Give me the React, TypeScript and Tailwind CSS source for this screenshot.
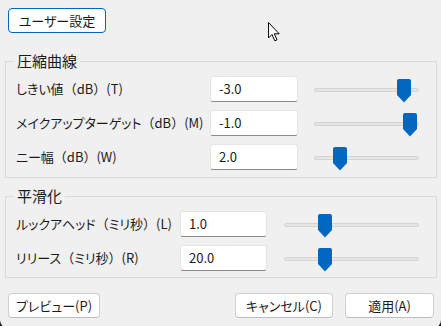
import React from 'react'

const font = { fontFamily: '"Noto Sans CJK JP", "Noto Sans", sans-serif' }

function Thumb({ left }: { left: number }) {
  return (
    <svg
      className="absolute top-[3px]"
      style={{ left }}
      width="14"
      height="24"
      viewBox="0 0 14 24"
    >
      <path d="M2 0 H12 Q14 0 14 2 V16 L7 23.5 L0 16 V2 Q0 0 2 0 Z" fill="#0067c0" />
    </svg>
  )
}

function Slider({ width, thumb }: { width: number; thumb: number }) {
  return (
    <div className="relative h-[26px] shrink-0" style={{ width }}>
      <div className="absolute left-0 right-0 top-[12px] h-[4px] rounded-[2px] bg-[#e6e6e6] border border-[#d4d4d4]" />
      <Thumb left={thumb} />
    </div>
  )
}

function Field({ value, width }: { value: string; width: string }) {
  return (
    <div
      className={`${width} h-[26px] shrink-0 bg-white border border-[#e5e5e5] border-b-[#8a8a8a] rounded-[3px] pl-[8px] flex items-center text-[13px] text-[#1b1b1b]`}
    >
      {value}
    </div>
  )
}

function Row({
  name,
  unit,
  hotkey,
  value,
  labelW,
  inputW,
  sliderGap,
  sliderW,
  thumb,
}: {
  name: string
  unit: string
  hotkey: string
  value: string
  labelW: string
  inputW: string
  sliderGap: string
  sliderW: number
  thumb: number
}) {
  return (
    <div className="flex items-center h-[26px]">
      <div className={`${labelW} shrink-0 text-[13px] text-[#1b1b1b] whitespace-nowrap`}>
        <span className="[font-feature-settings:'palt']">{name}</span>
        <span>（</span>
        <span className="[font-feature-settings:'palt']">{unit}</span>
        <span>）</span>
        <span>{hotkey}</span>
      </div>
      <Field value={value} width={inputW} />
      <div className={sliderGap} />
      <Slider width={sliderW} thumb={thumb} />
    </div>
  )
}

function Btn({ children, w, ml }: { children: React.ReactNode; w: string; ml?: string }) {
  return (
    <button
      className={`${w} ${ml ?? ''} h-[25px] bg-white border border-[#d0d0d0] border-b-[#bcbcbc] rounded-[4px] text-[13px] text-[#1b1b1b] flex items-center justify-center [font-feature-settings:'palt']`}
    >
      {children}
    </button>
  )
}

export default function App() {
  return (
    <div className="w-[441px] h-[326px] bg-[#1c1c1c] overflow-hidden" style={font}>
      <div className="relative w-[441px] h-[328px] bg-[#f0f0f0] rounded-b-[8px] pt-[8px]">
        {/* preset button */}
        <div className="pl-[8px]">
          <button className="w-[98px] h-[25px] bg-white border border-[#0067c0] rounded-[4px] text-[13px] text-[#1b1b1b] flex items-center justify-center [font-feature-settings:'palt']">
            ユーザー設定
          </button>
        </div>

        {/* Compression curve group */}
        <fieldset className="ml-[5px] w-[432px] mt-[19px] border border-[#dadada] pb-[7px]">
          <legend className="ml-[8px] px-[3px] text-[15px] leading-[18px] text-[#1b1b1b]">圧縮曲線</legend>
          <div className="flex flex-col gap-[8px] pl-[10px] pt-[6px]">
            <Row name="しきい値" unit="dB" hotkey="(T)" value="-3.0" labelW="w-[194px]" inputW="w-[88px]" sliderGap="w-[16px]" sliderW={105} thumb={83} />
            <Row name="メイクアップターゲット" unit="dB" hotkey="(M)" value="-1.0" labelW="w-[194px]" inputW="w-[88px]" sliderGap="w-[16px]" sliderW={105} thumb={89} />
            <Row name="ニー幅" unit="dB" hotkey="(W)" value="2.0" labelW="w-[194px]" inputW="w-[88px]" sliderGap="w-[16px]" sliderW={105} thumb={19} />
          </div>
        </fieldset>

        {/* Smoothing group */}
        <fieldset className="ml-[5px] w-[432px] mt-[9px] border border-[#dadada] pb-[6px]">
          <legend className="ml-[8px] px-[3px] text-[15px] leading-[18px] text-[#1b1b1b]">平滑化</legend>
          <div className="flex flex-col gap-[8px] pl-[10px] pt-[6px]">
            <Row name="ルックアヘッド" unit="ミリ秒" hotkey="(L)" value="1.0" labelW="w-[164px]" inputW="w-[87px]" sliderGap="w-[17px]" sliderW={135} thumb={34} />
            <Row name="リリース" unit="ミリ秒" hotkey="(R)" value="20.0" labelW="w-[164px]" inputW="w-[87px]" sliderGap="w-[17px]" sliderW={135} thumb={34} />
          </div>
        </fieldset>

        {/* bottom buttons */}
        <div className="flex items-center mt-[15px] pl-[8px]">
          <Btn w="w-[92px]">プレビュー(P)</Btn>
          <Btn w="w-[98px]" ml="ml-[135px]">キャンセル(C)</Btn>
          <Btn w="w-[89px]" ml="ml-[12px]">適用(A)</Btn>
        </div>

        {/* mouse pointer */}
        <svg className="absolute left-[268px] top-[22px]" width="13" height="20" viewBox="0 0 13 20">
          <path d="M0.5 0.5 V16 L4 12.5 L6.8 18.8 L9 17.8 L6.3 11.8 H11.2 Z" fill="white" stroke="black" strokeWidth="1" strokeLinejoin="round" />
        </svg>
      </div>
    </div>
  )
}
